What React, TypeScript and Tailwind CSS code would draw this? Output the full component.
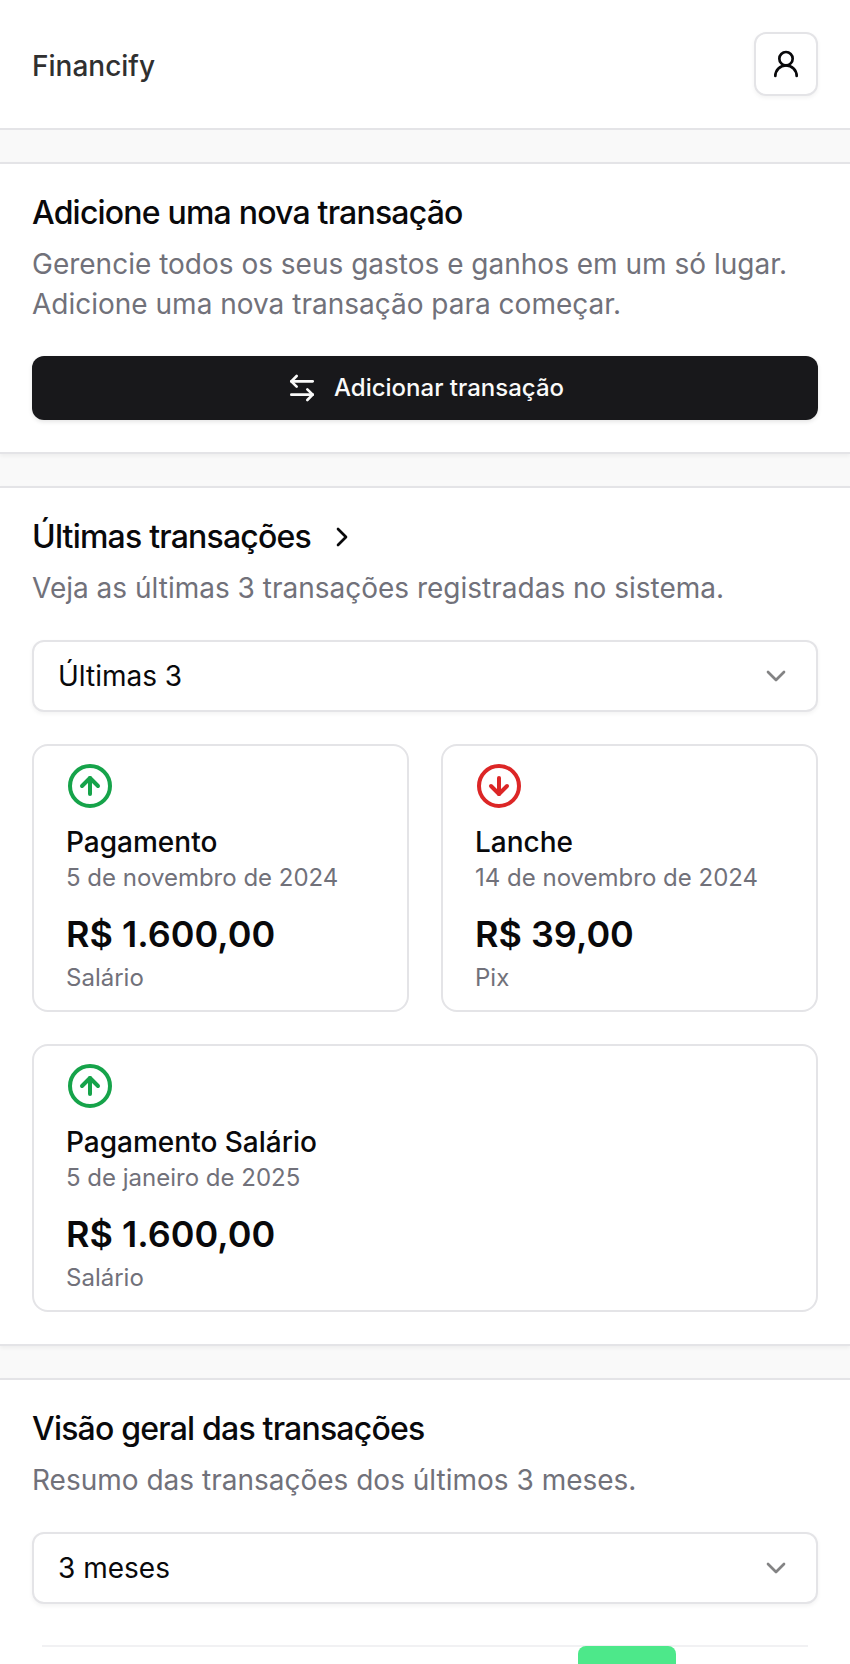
import React from "react";
import {
  ArrowLeftRight,
  ChevronDown,
  ChevronRight,
  CircleArrowDown,
  CircleArrowUp,
  UserRound,
} from "lucide-react";

type Transaction = {
  id: number;
  kind: "income" | "expense";
  name: string;
  date: string;
  amount: string;
  category: string;
};

const transactions: Transaction[] = [
  { id: 1, kind: "income", name: "Pagamento", date: "5 de novembro de 2024", amount: "R$ 1.600,00", category: "Salário" },
  { id: 2, kind: "expense", name: "Lanche", date: "14 de novembro de 2024", amount: "R$ 39,00", category: "Pix" },
  { id: 3, kind: "income", name: "Pagamento Salário", date: "5 de janeiro de 2025", amount: "R$ 1.600,00", category: "Salário" },
];

function Panel({ children, className = "pb-8" }: { children: React.ReactNode; className?: string }) {
  return (
    <section
      className={`flex flex-col gap-8 border-y-2 border-[#e4e4e7] bg-white px-8 pt-8 shadow-[0_2px_4px_rgba(0,0,0,0.05)] ${className}`}
    >
      {children}
    </section>
  );
}

function PanelHeader({ title, href, children }: { title: string; href?: string; children: React.ReactNode }) {
  return (
    <div className="flex flex-col gap-[14px]">
      <h2 className="text-[32px] leading-[34px] font-medium tracking-tight">
        {href ? (
          <a href={href} className="flex w-fit items-center gap-[15px]">
            {title}
            <ChevronRight size={32} />
          </a>
        ) : (
          title
        )}
      </h2>
      <p className="text-[28px] leading-10 text-[#71717a]">{children}</p>
    </div>
  );
}

function SelectBox({ label, options }: { label: string; options: string[] }) {
  return (
    <div className="relative">
      <select
        aria-label={label}
        className="block h-[72px] w-full appearance-none rounded-xl border-2 border-[#e4e4e7] bg-white px-6 text-[28px] leading-10 shadow-[0_2px_4px_rgba(0,0,0,0.05)]"
      >
        {options.map((option) => (
          <option key={option}>{option}</option>
        ))}
      </select>
      <ChevronDown size={32} className="pointer-events-none absolute top-5 right-[26px] opacity-50" />
    </div>
  );
}

function TransactionCard({ item }: { item: Transaction }) {
  return (
    <li className="flex flex-col rounded-2xl border-2 border-[#e4e4e7] px-8 py-4 last:odd:col-span-2">
      {item.kind === "income" ? (
        <CircleArrowUp size={48} className="text-[#16a34a]" />
      ) : (
        <CircleArrowDown size={48} className="text-[#dc2626]" />
      )}
      <h3 className="mt-3 text-[28px] leading-10 font-medium">{item.name}</h3>
      <p className="text-2xl leading-8 text-[#71717a]">{item.date}</p>
      <p className="mt-3 text-4xl leading-14 font-semibold">{item.amount}</p>
      <p className="text-2xl leading-8 text-[#71717a]">{item.category}</p>
    </li>
  );
}

export default function App() {
  return (
    <div className="min-h-screen bg-[#f9f9f9] font-[Inter,sans-serif] text-[#09090b] [font-optical-sizing:none]">
      <header className="flex items-center justify-between border-b-2 border-[#e4e4e7] bg-white p-8">
        <a href="#" className="pt-1 text-[28px] leading-10 font-medium text-[#303030]">
          Financify
        </a>
        <button
          type="button"
          aria-label="Perfil"
          className="flex size-16 items-center justify-center rounded-xl border-2 border-[#e4e4e7] bg-white shadow-[0_2px_4px_rgba(0,0,0,0.05)]"
        >
          <UserRound size={32} />
        </button>
      </header>

      <main className="flex flex-col gap-8 pt-8">
        <Panel>
          <PanelHeader title="Adicione uma nova transação">
            Gerencie todos os seus gastos e ganhos em um só lugar. Adicione uma nova transação para começar.
          </PanelHeader>
          <button
            type="button"
            className="flex h-16 w-full items-center justify-center gap-4 rounded-xl bg-[#18181b] text-2xl font-medium text-[#fafafa] shadow-[0_2px_4px_rgba(0,0,0,0.1)]"
          >
            <ArrowLeftRight size={32} />
            Adicionar transação
          </button>
        </Panel>

        <Panel>
          <PanelHeader title="Últimas transações" href="#transacoes">
            Veja as últimas 3 transações registradas no sistema.
          </PanelHeader>
          <SelectBox label="Quantidade de transações" options={["Últimas 3"]} />
          <ul className="grid grid-cols-2 gap-8">
            {transactions.map((item) => (
              <TransactionCard key={item.id} item={item} />
            ))}
          </ul>
        </Panel>

        <Panel className="border-b-0">
          <PanelHeader title="Visão geral das transações">Resumo das transações dos últimos 3 meses.</PanelHeader>
          <SelectBox label="Período" options={["3 meses"]} />
          <div className="px-[10px] pt-[9px]">
            <div className="grid grid-cols-3 border-t-2 border-[#f1f1f3]">
              <div className="col-start-3 -mt-px grid grid-cols-2 gap-2 px-[10%]">
                <div className="h-[18px] rounded-t-lg bg-[#4de88a]" />
              </div>
            </div>
          </div>
        </Panel>
      </main>
    </div>
  );
}
